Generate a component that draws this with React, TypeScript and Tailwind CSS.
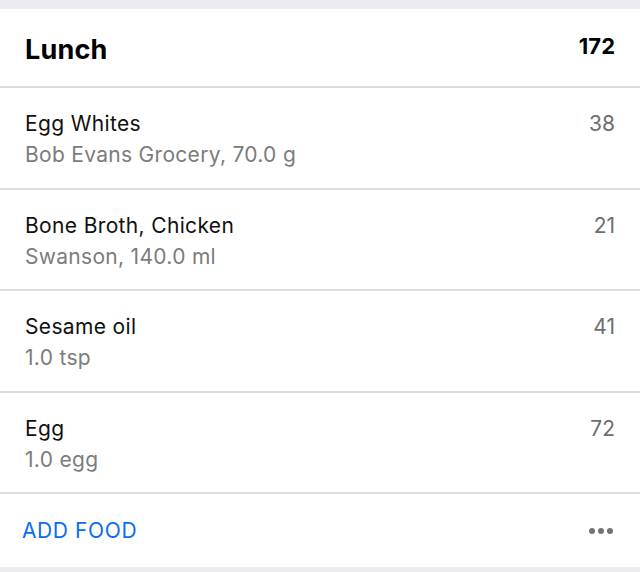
import React from 'react';

const items = [
  { name: 'Egg Whites', detail: 'Bob Evans Grocery, 70.0 g', cal: 38 },
  { name: 'Bone Broth, Chicken', detail: 'Swanson, 140.0 ml', cal: 21 },
  { name: 'Sesame oil', detail: '1.0 tsp', cal: 41 },
  { name: 'Egg', detail: '1.0 egg', cal: 72 },
];

export default function App() {
  return (
    <div className="w-[640px] h-[572px] bg-[#ebebf0] pt-[9px] font-['Inter',sans-serif] overflow-hidden">
      <div className="bg-white">
        {/* header */}
        <div className="h-[79px] px-[25px] flex items-center justify-between border-b-2 border-[#dcdcde]">
          <h2 className="text-[27px] font-bold text-black tracking-[0.2px] mt-[6px]">Lunch</h2>
          <span className="text-[22px] font-bold text-black -mt-[2px]">172</span>
        </div>

        {items.map((it) => (
          <div
            key={it.name}
            className="h-[101.5px] px-[25px] pt-[20px] flex justify-between border-b-2 border-[#dcdcde]"
          >
            <div>
              <div className="text-[21px] leading-[31px] tracking-[0.35px] text-[#111]">{it.name}</div>
              <div className="text-[21px] leading-[31px] tracking-[0.3px] text-[#7c7c7c]">{it.detail}</div>
            </div>
            <div className="text-[21px] leading-[31px] text-[#6e6e6e]">{it.cal}</div>
          </div>
        ))}

        {/* footer */}
        <div className="h-[73px] px-[22px] flex items-center justify-between">
          <button className="text-[21px] text-[#0a6cf0] tracking-[0.6px]">ADD FOOD</button>
          <div className="flex gap-[3px] mr-[5px]">
            <span className="w-[6px] h-[6px] rounded-full bg-[#737373]" />
            <span className="w-[6px] h-[6px] rounded-full bg-[#737373]" />
            <span className="w-[6px] h-[6px] rounded-full bg-[#737373]" />
          </div>
        </div>
      </div>
    </div>
  );
}
